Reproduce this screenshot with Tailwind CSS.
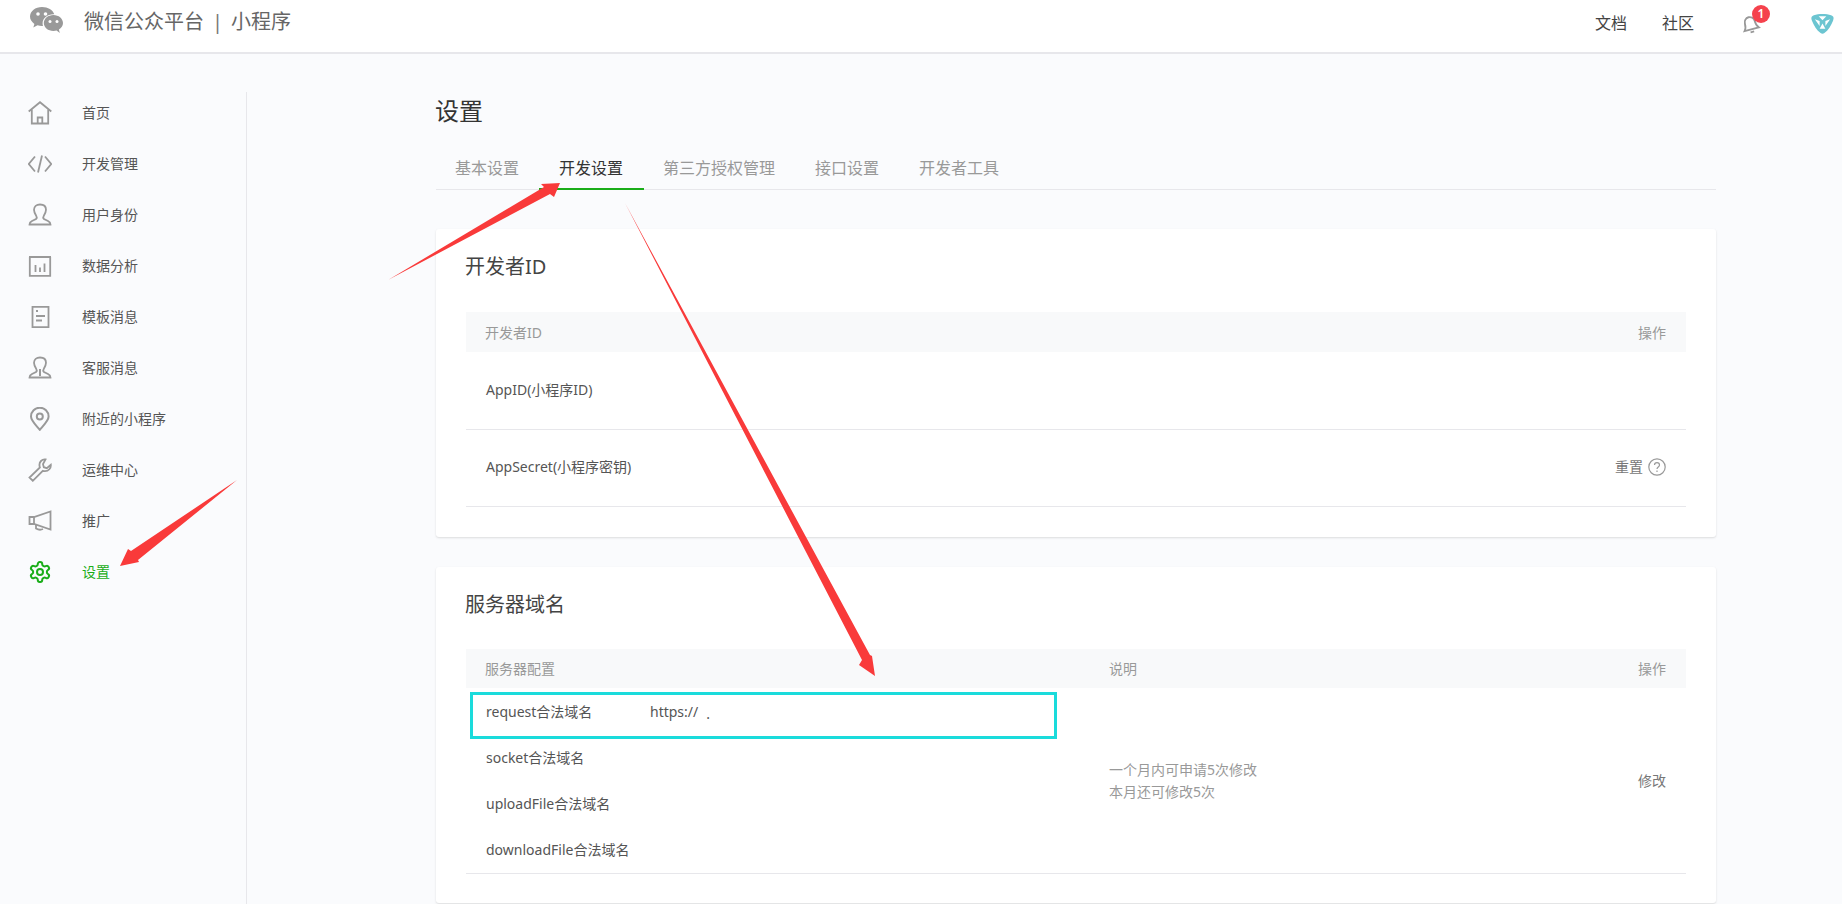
<!DOCTYPE html>
<html lang="zh-CN">
<head>
  <meta charset="UTF-8">
  <title>微信公众平台 小程序 设置</title>
  <script src="https://cdn.jsdelivr.net/npm/@tailwindcss/browser@4"></script>
</head>
<body class="relative h-[904px] overflow-hidden bg-[#fafbfd] text-[14px] text-[#555] font-['Noto_Sans','Noto_Sans_CJK_SC',sans-serif]">

  <!-- header -->
  <header class="h-[54px] bg-white border-b-2 border-[#e7e7eb] flex items-start pl-[30px] pr-[8px]">
    <svg class="w-[33px] h-[27px] mt-[7px]" viewBox="0 0 33 27" fill="#999">
      <path d="M12 0C5.400 0 0 4.200 0 9.600c0 3 1.700 5.500 4.400 7.300L3.300 20.500l4.200-2.200c1.400.4 2.900.7 4.500.7h1c-.3-.9-.4-1.700-.4-2.700 0-5 4.800-9 10.800-9h.9C22.900 3 18 0 12 0z"/>
      <path d="M33 16c0-4.400-4.400-8-9.600-8s-9.600 3.600-9.600 8 4.400 8 9.600 8c1.100 0 2.200-.2 3.200-.5l3.200 2.500-.9-3.400C31.300 21 33 18.700 33 16z"/>
      <circle cx="8" cy="7" r="1.800" fill="#fff"/><circle cx="15.500" cy="7" r="1.800" fill="#fff"/>
      <circle cx="20" cy="14.500" r="1.500" fill="#fff"/><circle cx="27" cy="14.500" r="1.500" fill="#fff"/>
    </svg>
    <div class="ml-[21px] h-[44px] flex items-center text-[20px] text-[#666]">
      <span>微信公众平台</span><span class="w-[27px] text-center text-[#777]">|</span><span>小程序</span>
    </div>
    <nav class="ml-auto h-[46px] flex items-center text-[16px] text-[#444]">
      <a class="mr-[35px]">文档</a>
      <a>社区</a>
      <div class="relative w-[24px] h-[24px] ml-[45px] mt-[-4px]">
        <svg class="w-[22px] h-[22px] mt-[3px] rotate-[-15deg]" viewBox="0 0 24 24" fill="none" stroke="#999" stroke-width="2">
          <path d="M4 19c1.800-2 2.500-4 2.500-8a5.500 5.500 0 0 1 11 0c0 4 .7 6 2.500 8z"/><path d="M10 22h4"/>
        </svg>
        <span class="absolute left-[13px] top-[-4px] w-[18px] h-[18px] rounded-full bg-[#f5424d] text-white text-[12px] font-semibold leading-[18px] text-center">1</span>
      </div>
      <svg class="w-[23px] h-[23px] ml-[48px]" viewBox="0 0 24 24" fill="#6cc5d1">
        <path d="M3 3.500C8 1.500 16 1.500 21 3.500 24 4.500 24 7 23 9 21 14 18 19 14 22 12.800 23 11.200 23 10 22 6 19 3 14 1 9 0 7 0 4.500 3 3.500z"/>
        <path fill="#fff" d="M8 4.500h8l-4 4zM4 7.500l5 2v5zM20 7.500l-5 2v5zM12 12l3 5.500H9z"/>
      </svg>
    </nav>
  </header>

  <div class="flex">
    <!-- sidebar -->
    <aside class="w-[247px] h-[812px] mt-[38px] border-r border-[#e7e7eb] shrink-0">
      <ul class="-mt-[5px]">
        <li class="h-[51px] pl-[28px] flex items-center gap-[30px]">
          <svg class="w-6 h-6 shrink-0" viewBox="0 0 24 24" fill="none" stroke="#999" stroke-width="1.800">
            <path d="M.7 10.500 12 1.200l11.300 9.300"/><path d="M3.800 8.500V22.500h16.400V8.500"/><path d="M9.700 22.500v-6h4.600v6"/>
          </svg>
          <span>首页</span>
        </li>
        <li class="h-[51px] pl-[28px] flex items-center gap-[30px]">
          <svg class="w-6 h-6 shrink-0" viewBox="0 0 24 24" fill="none" stroke="#999" stroke-width="1.800">
            <path d="M7 4.500.8 12 7 19.500"/><path d="M14 3.500 10 20.500"/><path d="M17 4.500 23.200 12 17 19.500"/>
          </svg>
          <span>开发管理</span>
        </li>
        <li class="h-[51px] pl-[28px] flex items-center gap-[30px]">
          <svg class="w-6 h-6 shrink-0" viewBox="0 0 24 24" fill="none" stroke="#999" stroke-width="1.800">
            <path d="M1.500 21.500c0-2 .5-2.500 2.500-3.500l4-2c1-1 1-2 .3-3C7 11 6 9 6 6.800 6 3.500 8.500 1.500 12 1.500s6 2 6 5.300c0 2.200-1 4.200-2.300 6.200-.7 1-.7 2 .3 3l4 2c2 1 2.500 1.500 2.500 3.500z"/>
          </svg>
          <span>用户身份</span>
        </li>
        <li class="h-[51px] pl-[28px] flex items-center gap-[30px]">
          <svg class="w-6 h-6 shrink-0" viewBox="0 0 24 24" fill="none" stroke="#999" stroke-width="1.800">
            <path d="M1 3h22" stroke-width="2"/><path d="M1.800 3v18.800h20.400V3"/><path d="M7.500 11v7M12 13.500V18M16.500 9.500V18"/>
          </svg>
          <span>数据分析</span>
        </li>
        <li class="h-[51px] pl-[28px] flex items-center gap-[30px]">
          <svg class="w-6 h-6 shrink-0" viewBox="0 0 24 24" fill="none" stroke="#999" stroke-width="1.800">
            <path d="M4.500 1.800h16v20.400h-16z"/><path d="M8 6h2M8 11h9M8 15.500h6"/>
          </svg>
          <span>模板消息</span>
        </li>
        <li class="h-[51px] pl-[28px] flex items-center gap-[30px]">
          <svg class="w-6 h-6 shrink-0" viewBox="0 0 24 24" fill="none" stroke="#999" stroke-width="1.800">
            <path d="M1.500 21.500c0-2 .5-2.500 2.500-3.500l4-2c1-1 1-2 .3-3C7 11 6 9 6 6.800 6 3.500 8.500 1.500 12 1.500s6 2 6 5.300c0 2.200-1 4.200-2.300 6.200-.7 1-.7 2 .3 3l4 2c2 1 2.500 1.500 2.500 3.500z"/>
            <path d="M12 13v7" stroke-width="2"/>
          </svg>
          <span>客服消息</span>
        </li>
        <li class="h-[51px] pl-[28px] flex items-center gap-[30px]">
          <svg class="w-6 h-6 shrink-0" viewBox="0 0 24 24" fill="none" stroke="#999" stroke-width="2">
            <path d="M11.800 22.800C6.800 17 3 13.500 3 9.500a8.800 8.800 0 0 1 17.600 0c0 4-3.800 7.500-8.800 13.300z"/><circle cx="11.800" cy="9.500" r="3"/>
          </svg>
          <span>附近的小程序</span>
        </li>
        <li class="h-[51px] pl-[28px] flex items-center gap-[30px]">
          <svg class="w-6 h-6 shrink-0" viewBox="0 0 24 24" fill="none" stroke="#999" stroke-width="1.800">
            <path d="M17.500 1.500c-3.500-.5-6.500 2.500-6 6 0 .8.200 1.400.4 2L1.500 19.500 4.800 22.800l10-10c.7.300 1.400.4 2.200.4 3.500 0 6.200-3 5.800-6.500l-4 3.500-3-1-.8-3z"/>
          </svg>
          <span>运维中心</span>
        </li>
        <li class="h-[51px] pl-[28px] flex items-center gap-[30px]">
          <svg class="w-6 h-6 shrink-0" viewBox="0 0 24 24" fill="none" stroke="#999" stroke-width="1.800">
            <path d="M1.500 8h4.500L22.500 2.500v18l-16.500-5.500H1.500z"/><path d="M6 8v7"/><path d="M8 16v3.500c2.500 1.500 5 1.500 7 .5"/>
          </svg>
          <span>推广</span>
        </li>
        <li class="h-[51px] pl-[28px] flex items-center gap-[30px] text-[#1aad19]">
          <svg class="w-6 h-6 shrink-0" viewBox="0 0 24 24" fill="none" stroke="#1aad19" stroke-width="2">
            <path d="M12.220 2h-.44a2 2 0 0 0-2 2v.18a2 2 0 0 1-1 1.730l-.43.25a2 2 0 0 1-2 0l-.15-.08a2 2 0 0 0-2.730.73l-.22.38a2 2 0 0 0 .73 2.730l.15.1a2 2 0 0 1 1 1.720v.51a2 2 0 0 1-1 1.740l-.15.09a2 2 0 0 0-.73 2.730l.22.38a2 2 0 0 0 2.730.73l.15-.08a2 2 0 0 1 2 0l.43.25a2 2 0 0 1 1 1.730V20a2 2 0 0 0 2 2h.44a2 2 0 0 0 2-2v-.18a2 2 0 0 1 1-1.730l.43-.25a2 2 0 0 1 2 0l.15.08a2 2 0 0 0 2.730-.73l.22-.39a2 2 0 0 0-.73-2.730l-.15-.08a2 2 0 0 1-1-1.740v-.5a2 2 0 0 1 1-1.740l.15-.09a2 2 0 0 0 .73-2.730l-.22-.38a2 2 0 0 0-2.730-.73l-.15.08a2 2 0 0 1-2 0l-.43-.25a2 2 0 0 1-1-1.730V4a2 2 0 0 0-2-2z"/>
            <circle cx="12" cy="12" r="3"/>
          </svg>
          <span>设置</span>
        </li>
      </ul>
    </aside>

    <!-- main -->
    <main class="ml-[189px] w-[1280px] shrink-0">
      <h1 class="h-[34px] mt-[40px] -ml-px text-[24px] leading-[34px] text-[#333]">设置</h1>
      <div class="mt-[21px] h-[41px] flex border-b border-[#e7e7eb] text-[16px] text-[#999]">
        <a class="h-[41px] pl-[19px] pr-[20px] leading-[39px]">基本设置</a>
        <a class="h-[41px] pl-[20px] pr-[21px] leading-[39px] text-[#333] border-b-2 border-[#1aad19]">开发设置</a>
        <a class="h-[41px] pl-[19px] pr-[20px] leading-[39px]">第三方授权管理</a>
        <a class="h-[41px] px-[20px] leading-[39px]">接口设置</a>
        <a class="h-[41px] px-[20px] leading-[39px]">开发者工具</a>
      </div>

      <section class="mt-[39px] h-[308px] bg-white rounded-[3px] shadow-[0_1px_2px_rgba(150,150,150,0.3)] px-[30px] pt-[21px]">
        <h2 class="h-[34px] -ml-px text-[20px] leading-[34px] text-[#444]">开发者ID</h2>
        <div class="mt-[28px] h-[40px] pl-[19px] pr-[20px] bg-[#f8f9fa] flex items-center justify-between text-[#999]">
          <span>开发者ID</span><span>操作</span>
        </div>
        <div class="h-[78px] pl-[20px] pb-[3px] flex items-center border-b border-[#e7e7eb]">AppID(小程序ID)</div>
        <div class="h-[77px] pl-[20px] pr-[20px] pb-[3px] flex items-center justify-between border-b border-[#e7e7eb]">
          <span>AppSecret(小程序密钥)</span>
          <span class="flex items-center gap-[5px] text-[#777]">重置
            <svg class="w-[18px] h-[18px]" viewBox="0 0 18 18" fill="none" stroke="#999" stroke-width="1.200">
              <circle cx="9" cy="9" r="8.200"/><path d="M6.500 7c0-3.300 5-3.300 5 0 0 2-2.500 2-2.500 4"/><path d="M9 12.500v1.500"/>
            </svg>
          </span>
        </div>
      </section>

      <section class="mt-[30px] h-[336px] bg-white rounded-[3px] shadow-[0_1px_2px_rgba(150,150,150,0.3)] px-[30px] pt-[21px]">
        <h2 class="h-[34px] -ml-px text-[20px] leading-[34px] text-[#444]">服务器域名</h2>
        <div class="mt-[27px] h-[39px] pl-[19px] pr-[20px] bg-[#f8f9fa] flex items-center text-[#999]">
          <span class="w-[624px]">服务器配置</span><span>说明</span><span class="ml-auto">操作</span>
        </div>
        <div class="relative flex border-b border-[#e7e7eb]">
          <div class="w-[643px] pl-[20px] pb-[1px]">
            <div class="h-[46px] flex items-center"><span class="w-[164px]">request合法域名</span><span>https://</span><span class="ml-[8px] mt-[4px]">.</span></div>
            <div class="h-[46px] flex items-center">socket合法域名</div>
            <div class="h-[46px] flex items-center">uploadFile合法域名</div>
            <div class="h-[46px] flex items-center">downloadFile合法域名</div>
          </div>
          <div class="flex items-center text-[#999] leading-[22px]">一个月内可申请5次修改<br>本月还可修改5次</div>
          <div class="ml-auto pr-[20px] flex items-center text-[#777]">修改</div>
          <div class="absolute left-[4px] top-[4px] w-[587px] h-[47px] border-[3px] border-[#1adbdb]"></div>
        </div>
      </section>
    </main>
  </div>

  <!-- red annotation arrows -->
  <svg class="absolute left-0 top-0 pointer-events-none" width="1842" height="904" fill="#f93a3a">
    <polygon points="388,280 544,187 541,184 560,183 554,197 550,194"/>
    <polygon points="237,480 131,551 128,549 120,566 139,562 138,560"/>
    <polygon points="625,203 862,660 859,665 875,676 872,656 870,655"/>
  </svg>
</body>
</html>
